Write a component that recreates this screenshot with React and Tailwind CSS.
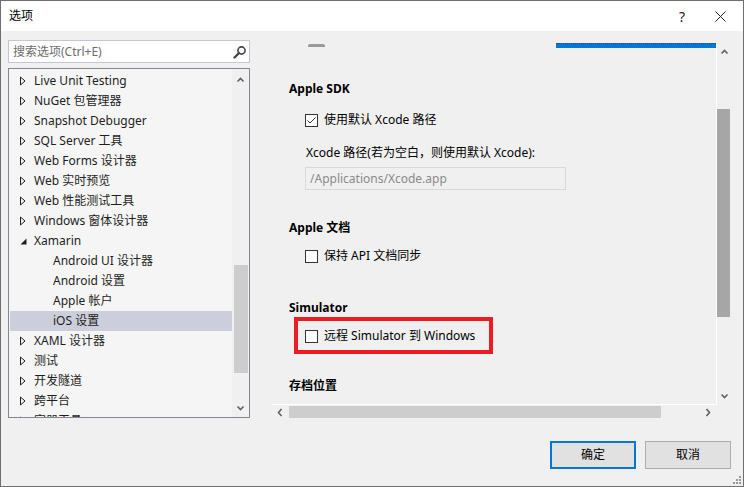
import React from 'react';

const FONT = { fontFamily: '"Noto Sans", "Noto Sans CJK SC", sans-serif' };

const TREE = [
    { label: 'Live Unit Testing', kind: 'closed' },
    { label: 'NuGet 包管理器', kind: 'closed' },
    { label: 'Snapshot Debugger', kind: 'closed' },
    { label: 'SQL Server 工具', kind: 'closed' },
    { label: 'Web Forms 设计器', kind: 'closed' },
    { label: 'Web 实时预览', kind: 'closed' },
    { label: 'Web 性能测试工具', kind: 'closed' },
    { label: 'Windows 窗体设计器', kind: 'closed' },
    { label: 'Xamarin', kind: 'open' },
    { label: 'Android UI 设计器', kind: 'child' },
    { label: 'Android 设置', kind: 'child' },
    { label: 'Apple 帐户', kind: 'child' },
    { label: 'iOS 设置', kind: 'child', selected: true },
    { label: 'XAML 设计器', kind: 'closed' },
    { label: '测试', kind: 'closed' },
    { label: '开发隧道', kind: 'closed' },
    { label: '跨平台', kind: 'closed' },
    { label: '容器工具', kind: 'closed' },
];

const Chevron = ({ dir = 'up', color = '#606060' }) => {
    const paths = {
        up: 'M1.5 5.5 L4.5 2.5 L7.5 5.5',
        down: 'M1.5 2.5 L4.5 5.5 L7.5 2.5',
        left: 'M5.5 1 L2.5 4.5 L5.5 8',
        right: 'M2.5 1 L5.5 4.5 L2.5 8',
    };
    return (
        <svg width="9" height="9" viewBox="0 0 9 9">
            <path d={paths[dir]} fill="none" stroke={color} strokeWidth="1.6" />
        </svg>
    );
};

const Checkbox = ({ checked }) => (
    <div className="w-[13px] h-[13px] border border-[#333333] bg-white flex items-center justify-center shrink-0">
        {checked && (
            <svg width="11" height="11" viewBox="0 0 11 11">
                <path d="M1.5 5.5 L4 8 L9.5 2.5" fill="none" stroke="#333" strokeWidth="1" />
            </svg>
        )}
    </div>
);

const TreeRow = ({ item }) => (
    <div className={`h-[20px] shrink-0 flex items-center text-[12px] leading-[16px] text-[#1e1e1e] ${item.selected ? 'bg-[#cccedb]' : ''}`}>
        {item.kind === 'child' ? (
            <span className="pl-[43px] whitespace-nowrap">{item.label}</span>
        ) : (
            <>
                <div className="w-[24px] flex justify-end pr-[8px]">
                    {item.kind === 'closed' ? (
                        <svg width="6" height="10" viewBox="0 0 6 10">
                            <path d="M0.5 1 L5 5 L0.5 9 Z" fill="none" stroke="#1e1e1e" strokeWidth="1" />
                        </svg>
                    ) : (
                        <svg width="7" height="7" viewBox="0 0 7 7" className="mr-[-1px]">
                            <path d="M6.5 0.5 L6.5 6.5 L0.5 6.5 Z" fill="#1e1e1e" />
                        </svg>
                    )}
                </div>
                <span className="whitespace-nowrap">{item.label}</span>
            </>
        )}
    </div>
);

const Heading = ({ children, className = '' }) => (
    <div className={`pl-[17px] text-[12px] leading-[16px] font-bold text-black ${className}`}>{children}</div>
);

const CheckRow = ({ checked, label, className = '' }) => (
    <div className={`flex items-center gap-[6px] h-[16px] text-[12px] leading-[16px] text-black ${className}`}>
        <Checkbox checked={checked} />
        <span className="whitespace-nowrap">{label}</span>
    </div>
);

export default function App() {
    return (
        <div style={FONT} className="relative w-[744px] h-[487px] border border-[#6f6f6f] bg-[#f0f0f0] flex flex-col overflow-hidden">
            {/* Title bar */}
            <div className="h-[30px] bg-white flex items-center shrink-0">
                <span className="pl-[8px] text-[12px] text-black">选项</span>
                <span className="ml-auto mr-[30px] text-[14px] text-[#222]">?</span>
                <svg width="11" height="11" viewBox="0 0 11 11" className="mr-[17px]">
                    <path d="M0.5 0.5 L10.5 10.5 M10.5 0.5 L0.5 10.5" stroke="#222" strokeWidth="1" />
                </svg>
            </div>

            {/* Main */}
            <div className="h-[388px] flex shrink-0">
                {/* Left column */}
                <div className="ml-[7px] pt-[9px] w-[242px] flex flex-col">
                    <div className="h-[23px] shrink-0 border border-[#c5c5d3] bg-white flex items-center pl-[4px] pr-[2px]">
                        <span className="text-[12px] text-[#6d6d6d] whitespace-nowrap">搜索选项(Ctrl+E)</span>
                        <svg width="14" height="14" viewBox="0 0 14 14" className="ml-auto">
                            <circle cx="8.5" cy="5.5" r="3.6" fill="none" stroke="#444" strokeWidth="1.6" />
                            <path d="M6 8 L1.5 12.5" stroke="#444" strokeWidth="2.4" strokeLinecap="round" />
                        </svg>
                    </div>
                    <div className="mt-[5px] h-[350px] shrink-0 border border-[#828790] bg-[#f5f5f5] flex overflow-hidden">
                        <div className="w-[222px] ml-[1px] pt-[2px] flex flex-col">
                            {TREE.map((item, i) => (
                                <TreeRow key={i} item={item} />
                            ))}
                        </div>
                        <div className="w-[17px] flex flex-col items-center bg-[#f0f0f0]">
                            <div className="h-[22px] shrink-0 flex items-center">
                                <Chevron dir="up" />
                            </div>
                            <div className="mt-[174px] shrink-0 w-[14px] h-[108px] bg-[#cdcdcd]" />
                            <div className="flex-1" />
                            <div className="h-[18px] shrink-0 flex items-center">
                                <Chevron dir="down" />
                            </div>
                        </div>
                    </div>
                </div>

                {/* Right column */}
                <div className="ml-[22px] mt-[12px] flex flex-col">
                    <div className="h-[362px] shrink-0 flex">
                        <div className="w-[445px] border-r border-b border-white overflow-hidden">
                            <div className="h-[5px] flex items-start">
                                <div className="ml-[36px] mt-[1px] w-[17px] h-[3px] rounded-t-[2px] bg-[#9a9a9a]" />
                                <div className="ml-auto w-[160px] h-[5px] bg-[#0078d7] border-t border-dotted border-[#444]" />
                            </div>
                            <Heading className="mt-[33px]">Apple SDK</Heading>
                            <CheckRow checked label="使用默认 Xcode 路径" className="ml-[33px] mt-[15px]" />
                            <div className="ml-[34px] mt-[17px] text-[12px] leading-[16px] text-black whitespace-nowrap">
                                Xcode 路径(若为空白，则使用默认 Xcode):
                            </div>
                            <div className="ml-[33px] mt-[6px] w-[261px] h-[23px] border border-[#d9d9d9] bg-[#f0f0f0] flex items-center pl-[4px]">
                                <span className="text-[12px] text-[#8a8a8a]">/Applications/Xcode.app</span>
                            </div>
                            <Heading className="mt-[30px]">Apple 文档</Heading>
                            <CheckRow label="保持 API 文档同步" className="ml-[33px] mt-[12px]" />
                            <Heading className="mt-[36px]">Simulator</Heading>
                            <div className="ml-[22px] mt-[1px] w-[199px] h-[37px] border-[4px] border-[#ed1c24] pl-[7px] pt-[7px]">
                                <CheckRow label="远程 Simulator 到 Windows" />
                            </div>
                            <Heading className="mt-[24px]">存档位置</Heading>
                        </div>
                        <div className="w-[14px] flex flex-col">
                            <div className="h-[18px] shrink-0 flex items-center justify-center">
                                <Chevron dir="up" />
                            </div>
                            <div className="mt-[48px] shrink-0 w-[13px] h-[208px] bg-[#a6a6a6]" />
                            <div className="flex-1" />
                            <div className="h-[17px] shrink-0 flex items-center justify-center">
                                <Chevron dir="down" />
                            </div>
                        </div>
                    </div>
                    <div className="w-[445px] h-[14px] shrink-0 flex items-center">
                        <div className="w-[17px] flex justify-center">
                            <Chevron dir="left" />
                        </div>
                        <div className="w-[372px] h-[12px] bg-[#cdcdcd]" />
                        <div className="flex-1" />
                        <div className="w-[17px] flex justify-center">
                            <Chevron dir="right" />
                        </div>
                    </div>
                </div>
            </div>

            {/* Buttons */}
            <div className="mt-[22px] h-[28px] flex justify-end gap-[9px] pr-[12px]">
                <button className="w-[86px] h-[28px] border-2 border-[#0078d7] bg-[#e1e1e1] text-[12px] text-black">确定</button>
                <button className="w-[86px] h-[28px] border border-[#adadad] bg-[#e1e1e1] text-[12px] text-black">取消</button>
            </div>

            {/* Resize grip */}
            <svg width="10" height="10" viewBox="0 0 10 10" className="absolute right-[1px] bottom-[1px]">
                <g fill="#9a9a9a">
                    <rect x="7" y="1" width="2" height="2" />
                    <rect x="4" y="4" width="2" height="2" />
                    <rect x="7" y="4" width="2" height="2" />
                    <rect x="1" y="7" width="2" height="2" />
                    <rect x="4" y="7" width="2" height="2" />
                    <rect x="7" y="7" width="2" height="2" />
                </g>
            </svg>
        </div>
    );
}
